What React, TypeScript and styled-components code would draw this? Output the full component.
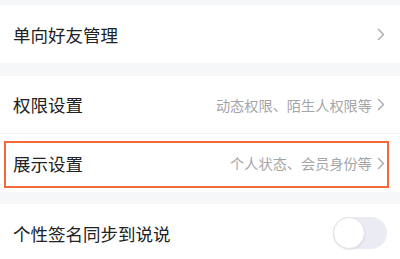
import React from 'react';
import styled, { createGlobalStyle } from 'styled-components';

const GlobalStyle = createGlobalStyle`
  html, body {
    margin: 0;
    padding: 0;
    background: #f6f7f9;
    font-family: "Noto Sans CJK SC", "Noto Sans", sans-serif;
  }
`;

const Page = styled.div`
  width: 400px;
  height: 259px;
  overflow: hidden;
  background: #f6f7f9;
  padding-top: 5px;
  box-sizing: border-box;
`;

const Group = styled.div<{ $gap?: number }>`
  background: #fff;
  margin-bottom: ${p => p.$gap ?? 13}px;
`;

const Row = styled.div<{ $divider?: boolean }>`
  position: relative;
  height: 58px;
  display: flex;
  align-items: center;
  justify-content: space-between;
  padding: 0 15px 0 13px;
  box-sizing: border-box;
  border-bottom: ${p => (p.$divider ? '1px solid #f2f2f4' : 'none')};
`;

const Title = styled.span`
  font-size: 17.5px;
  color: #222;
`;

const Right = styled.div`
  display: flex;
  align-items: center;
  gap: 5px;
`;

const Hint = styled.span`
  font-size: 14.2px;
  color: #a5a5a8;
`;

const Highlight = styled.div`
  position: absolute;
  left: 4px;
  right: 11px;
  top: 7px;
  bottom: 4px;
  border: 2.5px solid #f26a3b;
  pointer-events: none;
`;

const Toggle = styled.div`
  width: 54px;
  height: 32px;
  border-radius: 16px;
  background: #ebebf3;
  position: relative;
  margin-right: -2px;
`;

const Knob = styled.div`
  position: absolute;
  left: 0;
  top: 0;
  width: 32px;
  height: 32px;
  border-radius: 50%;
  background: #fff;
  border: 1px solid #e2e2e6;
  box-sizing: border-box;
  box-shadow: 0 1px 2px rgba(0, 0, 0, 0.08);
`;

const Chevron = () => (
  <svg width="8" height="13" viewBox="0 0 8 13" fill="none">
    <path d="M1.5 1.5 L6.5 6.5 L1.5 11.5" stroke="#a8a8ac" strokeWidth="1.4" strokeLinecap="round" strokeLinejoin="round" />
  </svg>
);

const App: React.FC = () => {
  return (
    <Page>
      <GlobalStyle />
      <Group>
        <Row>
          <Title>单向好友管理</Title>
          <Right>
            <Chevron />
          </Right>
        </Row>
      </Group>
      <Group $gap={12}>
        <Row $divider>
          <Title>权限设置</Title>
          <Right>
            <Hint>动态权限、陌生人权限等</Hint>
            <Chevron />
          </Right>
        </Row>
        <Row>
          <Title>展示设置</Title>
          <Right>
            <Hint>个人状态、会员身份等</Hint>
            <Chevron />
          </Right>
          <Highlight />
        </Row>
      </Group>
      <Group>
        <Row>
          <Title>个性签名同步到说说</Title>
          <Toggle>
            <Knob />
          </Toggle>
        </Row>
      </Group>
    </Page>
  );
};

export default App;
